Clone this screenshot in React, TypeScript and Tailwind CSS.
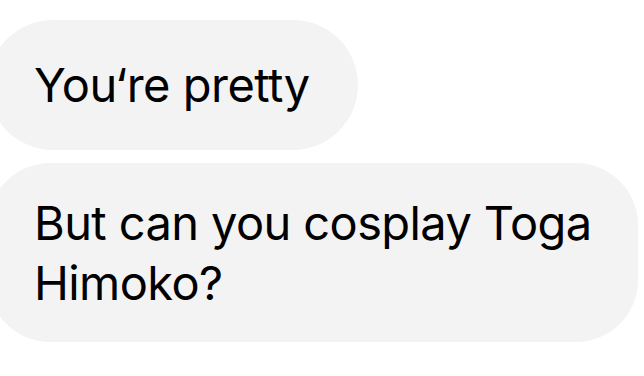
export default function App() {
  return (
    <div
      className="w-[644px] h-[376px] bg-white overflow-hidden flex flex-col items-start gap-[13px] pt-[20px]"
      style={{ fontFamily: 'Inter, "Liberation Sans", sans-serif' }}
    >
      <div className="-ml-[12px] w-[370px] h-[130px] rounded-[65px] bg-[#f3f3f3] flex items-center pl-[46px] pb-[2px]">
        <span className="text-[47px] leading-none text-black tracking-[-0.5px]">You‘re pretty</span>
      </div>
      <div className="-ml-[12px] w-[650px] h-[179px] rounded-[62px] bg-[#f3f3f3] flex items-center pl-[46px] pr-[20px]">
        <p className="text-[47px] leading-[60px] text-black tracking-[-0.6px]">
          But can you cosplay Toga
          <br />
          Himoko?
        </p>
      </div>
    </div>
  )
}
